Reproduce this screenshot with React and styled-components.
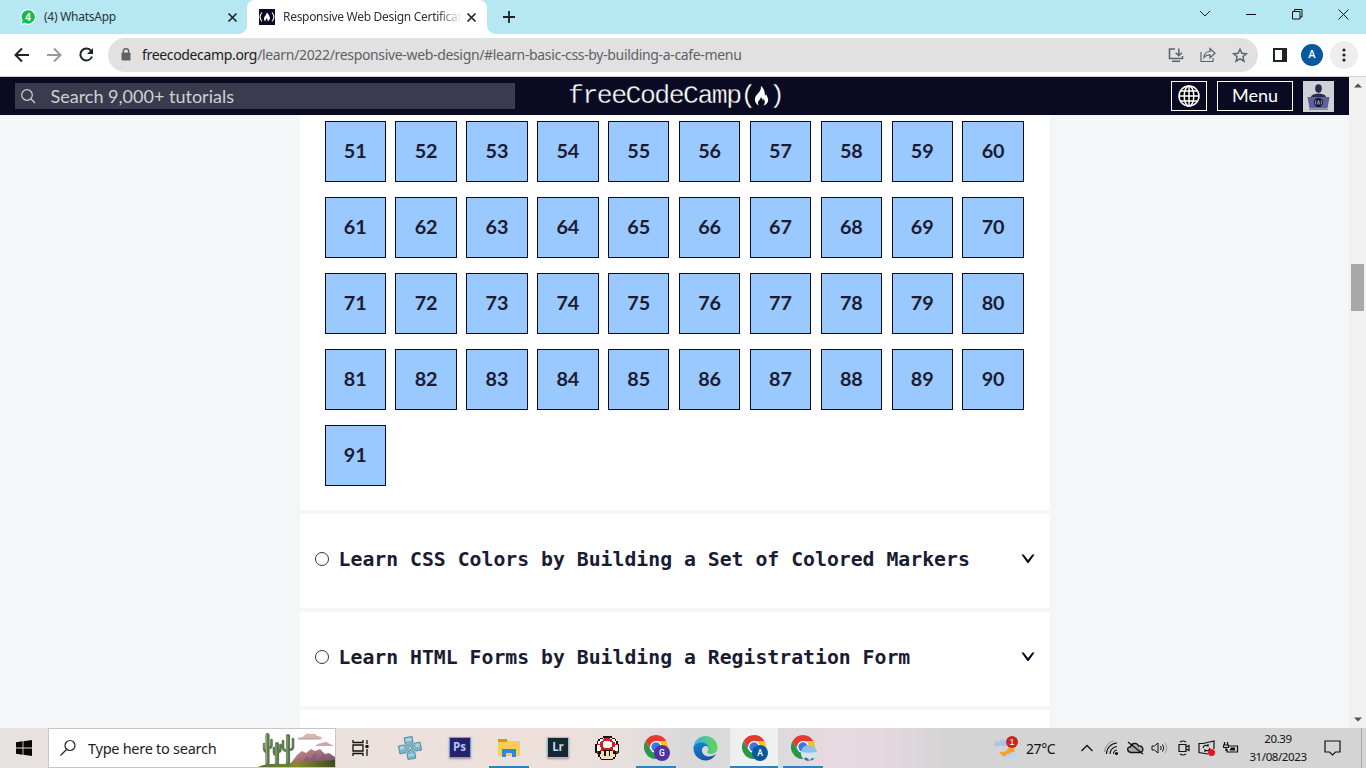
import React from "react";
import styled, { createGlobalStyle } from "styled-components";

const Global = createGlobalStyle`
  *{box-sizing:border-box}
  body{margin:0;overflow:hidden;background:#fff;}
  svg{display:block;flex:none}
`;
const ui = `"Noto Sans","Open Sans",sans-serif`;
const lato = `Lato,sans-serif`;

const Screen = styled.div`width:1366px;height:768px;display:flex;flex-direction:column;overflow:hidden;font-family:${ui};`;
const TabStrip = styled.div`height:34px;background:#b5e8f3;display:flex;align-items:stretch;flex:none;`;
const Tab = styled.div`
  position:relative;width:${p => p.$w}px;display:flex;align-items:center;padding:0 ${p => p.$pr}px 0 ${p => p.$pl}px;color:#2a3235;
  background:${p => (p.$active ? "#fff" : "transparent")};border-radius:8px 8px 0 0;
  ${p => p.$active && `
    &::before,&::after{content:"";position:absolute;bottom:0;width:8px;height:8px;}
    &::before{left:-8px;background:radial-gradient(circle at 0 0,transparent 7.5px,#fff 8px);}
    &::after{right:-8px;background:radial-gradient(circle at 100% 0,transparent 7.5px,#fff 8px);}
  `}
`;
const TabLabel = styled.span`
  flex:1;min-width:0;white-space:nowrap;margin:0 4px 0 ${p => p.$ml}px;font-size:12px;line-height:18px;letter-spacing:${p => p.$ls}px;
  ${p => p.$fade && "mask-image:linear-gradient(90deg,#000 86%,transparent);"}
`;
const NewTab = styled.div`padding:11px 0 0 16px;flex:1;`;
const WindowButtons = styled.div`display:flex;align-items:center;height:28px;`;
const WindowButton = styled.div`width:46px;display:flex;justify-content:center;`;

const Toolbar = styled.div`height:43px;flex:none;background:#fff;border-bottom:1px solid #d0d2d2;display:flex;align-items:center;`;
const NavButtons = styled.div`display:flex;gap:12px;width:108px;padding-left:12px;`;
const Address = styled.div`
  width:1150px;height:34px;border-radius:17px;background:#e1e1e1;display:flex;align-items:center;padding:0 8px 0 8px;
`;
const Url = styled.div`flex:1;margin-left:6px;font-size:14px;line-height:20px;color:#5f6265;letter-spacing:-.338px;white-space:nowrap;b{font-weight:400;color:#1d2023}`;
const AddressIcons = styled.div`display:flex;gap:12px;`;
const Avatar = styled.div`width:22px;height:22px;border-radius:50%;background:#07599e;color:#fff;font:500 11px/22px Roboto,sans-serif;text-align:center;margin-left:14px;`;
const MoreButton = styled.div`width:28px;height:28px;border-radius:50%;background:#eee;display:flex;align-items:center;justify-content:center;margin-left:7px;`;

const Viewport = styled.div`height:651px;flex:none;display:flex;`;
const Site = styled.div`width:1349px;display:flex;flex-direction:column;background:#f5f6f7;overflow:hidden;`;
const SiteNav = styled.header`height:38px;flex:none;background:#0a0a23;display:flex;align-items:center;padding:0 15px;`;
const SearchBox = styled.div`width:500px;height:26px;background:#3b3b4f;color:#d0d0d5;display:flex;align-items:center;padding-left:5px;font:18px/26px ${lato};span{margin-left:13.500px}`;
const Logo = styled.div`
  display:flex;align-items:center;margin-left:53px;width:603px;height:38px;color:#fff;white-space:nowrap;
  font:26.500px/36px "Liberation Mono",monospace;letter-spacing:-1.52px;-webkit-text-stroke:.35px #0a0a23;svg{margin:0 0 1px -1px}
`;
const NavButton = styled.div`height:30px;width:${p => p.$w}px;border:1px solid #fff;color:#fff;display:flex;align-items:center;justify-content:center;font:18px/27px ${lato};margin-right:10px;padding-bottom:1px;`;

const Main = styled.main`width:750px;margin-left:300px;flex:1;overflow:hidden;`;
const StepsPanel = styled.section`background:#fff;height:395px;padding:6px 0 0 24.52px;`;
const StepGrid = styled.div`display:grid;grid-template-columns:repeat(10,61.45px);column-gap:9.45px;row-gap:15.1px;`;
const Step = styled.div`height:61px;border:1px solid #0a0a23;background:#99c9ff;color:#1b1b32;font:700 19.8px/56.6px ${lato};text-align:center;`;
const Course = styled.section`margin-top:4px;height:94px;background:#fff;display:flex;align-items:center;padding:0 15px 4px;`;
const CourseTitle = styled.h3`flex:1;margin:1px 0 0 9.6px;color:#1b1b32;font:700 19.8px/30px "DejaVu Sans Mono",monospace;white-space:nowrap;`;

const ScrollTrack = styled.div`width:17px;background:#f1f1f1;display:flex;flex-direction:column;align-items:center;`;
const ScrollArrow = styled.div`height:17px;display:flex;align-items:center;`;
const ScrollThumb = styled.div`width:13px;height:47px;margin:170px 0 400px;background:#a8a8a8;`;

const Taskbar = styled.footer`
  height:40px;flex:none;display:flex;color:#111;
  background:linear-gradient(90deg,#e6e2df 0,#ebe1dd 340px,#eee0db 560px,#e5dfdd 630px,#d9d9da 690px,#dddadc 780px,#e7d9e0 830px,#e5d8df 880px,#d4d4d4 950px);
`;
const StartButton = styled.div`width:48px;display:flex;align-items:center;justify-content:center;`;
const TaskSearch = styled.div`width:288px;background:#fff;border:1px solid #c6c6c6;display:flex;align-items:center;padding-left:10px;font-size:14.5px;color:#222;overflow:hidden;`;
const TaskSearchText = styled.span`flex:1;margin-left:11px;white-space:nowrap;letter-spacing:-.27px;`;
const TaskApp = styled.div`
  width:${p => p.$w || 49}px;display:flex;align-items:center;justify-content:center;
  background:${p => (p.$active ? "#f0eff0" : "transparent")};
  ${p => p.$open && `box-shadow:inset 0 -2px #2f83b8;`}
  ${p => p.$gap && `margin:0 ${p.$gap}px;`}
  ${p => p.$shift && `padding-left:${p.$shift}px;`}
`;
const AppTile = styled.div`width:22px;height:21px;border:1px solid ${p => p.$edge};background:${p => p.$bg};color:${p => p.$fg};font:700 11.5px/18px "Open Sans",sans-serif;text-align:center;box-shadow:0 1px 2px #0005;margin-bottom:2px;`;
const Tray = styled.div`margin-left:auto;width:373px;display:flex;align-items:center;`;
const Temp = styled.span`margin-left:7px;width:51px;font-size:14px;letter-spacing:-.4px;white-space:nowrap;`;
const TrayIcons = styled.div`display:flex;align-items:center;gap:7px;margin-left:${p => p.$ml}px;`;
const Clock = styled.div`width:80px;text-align:center;font-size:11.5px;line-height:18px;letter-spacing:-.4px;margin-left:-1px;`;
const DesktopEdge = styled.div`margin-left:auto;width:5px;height:40px;border-left:1px solid #a3a3a3;`;

const Close = () => <svg width="11" height="11" viewBox="0 0 11 11"><path d="M1.5 1.5l8 8m0-8l-8 8" stroke="#202427" strokeWidth="1.7" /></svg>;
const Flame = ({ w, h, c = "#fff" }) => (
  <svg width={w} height={h} viewBox="0 0 14 20"><path fill={c} d="M6.300 0c.5 3.200-.7 5-2.700 7.300C1.600 9.700.2 11.500.4 14c.2 2.600 2 4.600 4.200 5.600-1.200-1.400-1.500-3-.6-4.500.8-1.300 2.300-2 2.200-3.800 1.600.8 2 2 1.700 3.100 1-.2 1.400-1 1.300-1.900 1.300 2 1.600 5.200-.3 7.200 2.900-1 4.900-3.200 4.800-6.100-.1-2.300-1.700-3.500-2-5.700-.4.900-.6 1.500-1.300 1.600C10.600 6.400 9.600 2 6.300 0z" /></svg>
);
const FccBadge = () => (
  <svg width="16" height="16" viewBox="0 0 16 16"><path fill="#0a0a23" d="M0 0h16v16H0z" /><path d="M3 3.500c-2.300 2.700-2.300 6.300 0 9m10-9c2.300 2.700 2.300 6.300 0 9" fill="none" stroke="#fff" strokeWidth="1.100" /><path fill="#fff" d="M7.500 3.500c.4 2.500-2.800 4-2.500 6.500 0 1.200.8 2 1.600 2.300-.5-1.300.7-2 1-3 .8.900 1.500 1.900.8 3 1.800-.4 2.700-1.600 2.500-3.200C10.700 7 9.500 4.500 7.500 3.500z" /></svg>
);
const Chevron = () => <svg width="14" height="12" viewBox="0 0 14 12"><path d="M.4 1.500h2.300L7 7 11.300 1.500h2.300L7.600 10H6.400z" fill="#0a0a23" /></svg>;

const Chrome = ({ children }) => (
  <svg width="28" height="28" viewBox="0 0 28 28">
    <path d="M1.600 7A12 12 0 0 1 22.400 7L12 7z" fill="#e33b2e" />
    <path d="M1.600 7A12 12 0 0 0 12 25L17.200 16 6.800 16z" fill="#279847" />
    <path d="M22.400 7A12 12 0 0 1 12 25L17.200 16 12 7z" fill="#fbc116" />
    <path d="M1.600 7h10.400v6H5z" fill="#e33b2e" />
    <circle cx="12" cy="13" r="6" fill="#fff" /><circle cx="12" cy="13" r="4.700" fill="#3979de" />
    {children}
  </svg>
);
const ProfileDot = ({ fill, letter }) => (<><circle cx="18" cy="19" r="8" fill={fill} /><text x="18" y="22.200" textAnchor="middle" fontFamily="Roboto" fontSize="8.500" fontWeight="500" fill="#fff">{letter}</text></>);

const Desert = () => (
  <svg width="77" height="38" viewBox="0 0 77 38">
    <defs><linearGradient id="mt" x2="1" y2="1"><stop stopColor="#d38f8a" /><stop offset="1" stopColor="#674c6c" /></linearGradient><linearGradient id="hill" x2="1"><stop stopColor="#4e6b24" /><stop offset=".5" stopColor="#8a8a2c" /><stop offset="1" stopColor="#3d4a20" /></linearGradient></defs>
    <path d="M39 10q1-2 6-2 3-5 8-3 5-1 6 2 5 0 5 3z" fill="#dfb3a6" /><path d="M39 10.500h25q-6-2-12-1-7-1-13 1z" fill="#9ba1c0" />
    <path d="M57 17q3-3 7-3 4-2 6 0l6 3z" fill="#c9a6ab" />
    <path d="M33 34l6-8 5-4 4 2 5-4 4 2 5-2 5 5 4-1 6 4v7z" fill="url(#mt)" />
    <path d="M44 34l5-7 3 4 5-8 2 9 7-7 4 9z" fill="#84597a" opacity=".7" />
    <path d="M0 38q9-4 25-3 20-3 53-4v7z" fill="url(#hill)" />
    <g fill="none" strokeLinecap="round"><g stroke="#5d7950" strokeWidth="4.200"><path d="M9.500 36V6M19 36V15M30 36V7" /></g><g stroke="#5d7950" strokeWidth="2.600"><path d="M6 15v4q0 4 4 4M13.500 11v5q0 3-3 3M16 19v4q0 3 3 3M22.500 16v4q0 3-3 3M25 12v6q0 4 5 4M35 10v8q0 3-5 3" /></g><g stroke="#9eb07c" strokeWidth=".9"><path d="M8.500 34V6M18 34V15M29 34V7M6 15v4" /></g></g>
  </svg>
);

const mushroomRows = [
  ".....kkkkkk.....",
  "...kkwrrrrwkk...",
  "..kwwrrrrrrwwk..",
  ".kwwrrwwwwrrwwk.",
  ".kwrrwwwwwwrrwk.",
  "krrrrwwwwwwrrrrk",
  "kwwrrwwwwwwrrwwk",
  "kwwwrrwwwwrrwwwk",
  "kwwwrrrrrrrrwwwk",
  "kwwrrkkkkkkrrwwk",
  "krkkppkppkppkkrk",
  ".kkkppkppkppkkk.",
  "..kpppkppkpppk..",
  "..kppppppppppk..",
  "...kppppppppk...",
  "....kkkkkkkk....",
];
const mushroomInk = { k: "#16110f", w: "#fff", r: "#d51d1f", p: "#f5dcb8" };
const Mushroom = () => (
  <svg width="24" height="24" viewBox="0 0 16 16" shapeRendering="crispEdges">
    {mushroomRows.flatMap((row, y) => [...row].map((c, x) => c !== "." && <rect key={`${x}-${y}`} x={x} y={y} width="1" height="1" fill={mushroomInk[c]} />))}
  </svg>
);

const courses = ["Learn CSS Colors by Building a Set of Colored Markers", "Learn HTML Forms by Building a Registration Form"];

function BrowserTop() {
  return (<>
    <TabStrip>
      <Tab $w={247} $pl={20} $pr={9.5}>
        <svg width="16" height="16" viewBox="0 0 16 16"><path d="M8 .2a7.800 7.800 0 1 1-3.500 14.700L.5 16l1-4A7.800 7.800 0 0 1 8 .2z" fill="#fff" /><path d="M8 1.200a6.700 6.700 0 1 1-3 12.600L1.800 14.700l.9-3.100A6.700 6.700 0 0 1 8 1.200z" fill="#13bd4b" /><text x="8" y="11.500" textAnchor="middle" fontSize="10" fontWeight="700" fontFamily="Liberation Sans" fill="#fff">4</text></svg>
        <TabLabel $ml={8} $ls={-.25}>(4) WhatsApp</TabLabel><Close />
      </Tab>
      <Tab $w={240} $pl={12} $pr={10.5} $active><FccBadge /><TabLabel $ml={8} $ls={-.3} $fade>Responsive Web Design Certificat</TabLabel><Close /></Tab>
      <NewTab><svg width="12" height="12"><path d="M6 0v12M0 6h12" stroke="#1d2528" strokeWidth="1.800" /></svg></NewTab>
      <WindowButtons>
        <WindowButton><svg width="12" height="8"><path d="M1 1l5 5 5-5" fill="none" stroke="#222" /></svg></WindowButton>
        <WindowButton><svg width="10" height="2"><path d="M0 1.500h10" stroke="#111" /></svg></WindowButton>
        <WindowButton><svg width="11" height="11" fill="none" stroke="#111"><path d="M.5 2.500h7.500v7.500H.5zM2.500 2.500v-2h7.500v7.500H8" /></svg></WindowButton>
        <WindowButton><svg width="11" height="11"><path d="M.5.5l10 10m0-10l-10 10" stroke="#111" /></svg></WindowButton>
      </WindowButtons>
    </TabStrip>
    <Toolbar>
      <NavButtons>
        <svg width="20" height="20" viewBox="0 0 20 20" fill="none" stroke="#202427" strokeWidth="2"><path d="M17 10H4M10 3.500L3.500 10l6.500 6.500" /></svg>
        <svg width="20" height="20" viewBox="0 0 20 20" fill="none" stroke="#999" strokeWidth="2"><path d="M3 10h13M10 3.500l6.500 6.500-6.500 6.500" /></svg>
        <svg width="20" height="20" viewBox="0 0 20 20" fill="none" stroke="#202427" strokeWidth="2"><path d="M15.200 6A6 6 0 1 0 16 11.500" /><path d="M17 3v6h-6z" fill="#202427" stroke="none" /></svg>
      </NavButtons>
      <Address>
        <svg width="20" height="20" viewBox="0 0 20 20"><path d="M6 8h8v7H6z" fill="#5f6265" stroke="#5f6265" strokeLinejoin="round" /><path d="M7.300 8V6.500a2.700 2.700 0 0 1 5.400 0V8" fill="none" stroke="#5f6265" strokeWidth="1.400" /></svg>
        <Url><b>freecodecamp.org</b>/learn/2022/responsive-web-design/#learn-basic-css-by-building-a-cafe-menu</Url>
        <AddressIcons>
          <svg width="20" height="20" viewBox="0 0 20 20" fill="none" stroke="#5f6265" strokeWidth="1.500"><path d="M9 4H3.500v9.500h13V11M6 16.300h8M12.800 3.500v7M9.700 7.700l3.100 3.100 3.100-3.100" /></svg>
          <svg width="20" height="20" viewBox="0 0 20 20" fill="none" stroke="#5f6265" strokeWidth="1.200"><path d="M3 7v9.500h12V13M6 12.500c.3-4 2.500-6 6-6V3.500l5 4.700-5 4.600V9.800c-2.800 0-4.500.8-6 2.700z" /></svg>
          <svg width="20" height="20" viewBox="0 0 20 20" fill="none" stroke="#5f6265" strokeWidth="1.400"><path d="M10 4l1.800 4.300 4.600.4-3.500 3 1.100 4.500-4-2.400-4 2.400 1.100-4.500-3.500-3 4.600-.4z" /></svg>
        </AddressIcons>
      </Address>
      <svg width="14" height="14" style={{ marginLeft: 15 }}><path d="M1 1h12v12H1z" fill="#fff" stroke="#202427" strokeWidth="2" /><path d="M9 0h5v14H9z" fill="#202427" /></svg>
      <Avatar>A</Avatar>
      <MoreButton><svg width="4" height="14" fill="#222"><circle cx="2" cy="2" r="1.600" /><circle cx="2" cy="7" r="1.600" /><circle cx="2" cy="12" r="1.600" /></svg></MoreButton>
    </Toolbar>
  </>);
}

function SiteHeader() {
  return (
    <SiteNav>
      <SearchBox><svg width="17" height="17" viewBox="0 0 17 17" fill="none" stroke="#d0d0d5" strokeWidth="1.200"><circle cx="7" cy="7" r="5.300" /><path d="M11 11l4 4" /></svg><span>Search 9,000+ tutorials</span></SearchBox>
      <Logo>freeCodeCamp(<Flame w={15} h={20} />)</Logo>
      <NavButton $w={36}><svg width="24" height="24" viewBox="0 0 24 24" fill="none" stroke="#fff" strokeWidth="1.500"><circle cx="12" cy="12" r="10" fill="#000" /><ellipse cx="12" cy="12" rx="4.800" ry="10" /><path d="M12 2v20M2 12h20M3.500 7h17M3.500 17h17" /></svg></NavButton>
      <NavButton $w={76}>Menu</NavButton>
      <svg width="31" height="31" viewBox="0 0 31 31"><path fill="#d0d0d5" d="M0 0h31v31H0z" /><ellipse cx="15.500" cy="7.500" rx="3.300" ry="4.200" fill="#2a2a4a" /><path d="M8 16q0-3 7.500-3.500Q23 13 23 16z" fill="#2a2a4a" /><path d="M4.500 16h22l-2 11.500h-18z" fill="#5f5f9c" /><circle cx="15.500" cy="21.500" r="4.600" fill="#14142e" /><path d="M13 19.500q-1.500 2 0 4M18 19.500q1.500 2 0 4M14.500 23.500l1-4 1 4" fill="none" stroke="#d0d0d5" strokeWidth=".8" /><path d="M6 28.500h19" stroke="#8585b0" /></svg>
    </SiteNav>
  );
}

function Tasks() {
  return (
    <Taskbar>
      <StartButton><svg width="16" height="16" viewBox="0 0 16 16"><path d="M0 2.200l6.600-.9v6.200H0zM7.400 1.200L16 0v7.500H7.400zM0 8.400h6.600v6.300L0 13.800zM7.400 8.400H16V16l-8.600-1.200z" fill="#080808" /></svg></StartButton>
      <TaskSearch>
        <svg width="18" height="18" viewBox="0 0 18 18" fill="none" stroke="#222" strokeWidth="1.200"><circle cx="11" cy="6.500" r="5" /><path d="M7.500 10.500L1.500 16.500" /></svg>
        <TaskSearchText>Type here to search</TaskSearchText><Desert />
      </TaskSearch>
      <TaskApp $w={48}><svg width="17" height="16" viewBox="0 0 17 16" fill="none" stroke="#111" strokeWidth="1.300"><path d="M1 0v2.500h10V0M1 5h10v6H1zM1 16v-2.500h10V16M15 0v4M15 9v7" /><path d="M13.500 5h3v3h-3z" fill="#111" stroke="none" /></svg></TaskApp>
      <TaskApp $w={51} $shift={1}><svg width="24" height="24" viewBox="0 0 24 24"><g fill="#79b8cb" stroke="#4f8196" strokeWidth=".8" transform="rotate(-10 12 12)"><path d="M8 1h8v6l-4 4-4-4zM8 23h8v-6l-4-4-4 4zM1 8v8h6l4-4-4-4zM23 8v8h-6l-4-4 4-4z" /><path d="M9 2h6v3H9zM2 9h4v3H2zM18 9h4v3h-4zM9 18h6v2H9z" fill="#add9e4" stroke="none" /></g></svg></TaskApp>
      <TaskApp><AppTile $bg="#28206b" $fg="#a8c9fb" $edge="#6aa4dc">Ps</AppTile></TaskApp>
      <TaskApp $w={40} $gap={5} $open><svg width="22" height="20" viewBox="0 0 22 20"><path d="M0 2h9l2 1h11v15H0z" fill="#f9cc53" /><path d="M0 1h9v3H0z" fill="#d8970c" /><path d="M4 19v-8h14v8h-4v-4H8v4z" fill="#2e88d9" /></svg></TaskApp>
      <TaskApp $w={48}><AppTile $bg="#18262f" $fg="#b8dcec" $edge="#93c4d6">Lr</AppTile></TaskApp>
      <TaskApp $w={49}><Mushroom /></TaskApp>
      <TaskApp $w={40} $gap={5} $shift={4} $open><Chrome><ProfileDot fill="#5230a5" letter="G" /></Chrome></TaskApp>
      <TaskApp $w={49}><svg width="25" height="25" viewBox="0 0 25 25"><defs><linearGradient id="ea" x2="1"><stop stopColor="#35b6e4" /><stop offset="1" stopColor="#62d64f" /></linearGradient><linearGradient id="eb" x2=".5" y2="1"><stop stopColor="#1883d4" /><stop offset="1" stopColor="#1256aa" /></linearGradient></defs><path d="M.5 12A12 12 0 0 1 24.500 12c0 4-3 6-7 6-2 0-4-1-3-2.500 2-3 0-6.500-4-6.500-4 0-8 1-10 3z" fill="url(#ea)" /><path d="M.5 12c1-4 5-6 9-5.500 3 .3 6 3 6 5.500-1-2-3-2.500-4.500-1.500C7 13 9 20 15 20.500c3 .2 6-.8 8-2.500C20 23 16 24.500 12.500 24.500A12 12 0 0 1 .5 12z" fill="url(#eb)" /></svg></TaskApp>
      <TaskApp $w={48} $shift={4} $open $active><Chrome><ProfileDot fill="#07599e" letter="A" /></Chrome></TaskApp>
      <TaskApp $w={40} $gap={5} $shift={4} $open><Chrome><circle cx="18" cy="19" r="8" fill="#8fc1e6" /><path d="M10.100 18q8 1.500 15.800 0a8 8 0 0 1-2.500 6.800H12.500a8 8 0 0 1-2.400-6.800z" fill="#d3e5f0" /><path d="M13 25q2-3 4 0l1 2q-3 0-5-2zM20 25q2-2 3 0l-3 1.500z" fill="#59636f" /></Chrome></TaskApp>
      <Tray>
        <svg width="26" height="26" viewBox="0 0 26 26"><path d="M16 8c1 6-3 10-10 9 3 5 10 7 14 3s1-10-4-12z" fill="#f5a32a" /><path d="M2 9c0-3 3-4 4-2 2-4 7-3 7 1 3 0 3 3 1 3H3c-2 0-3-1-1-2z" fill="#a8c6eb" /><path d="M13 21c0-3 3-3 4-2 2-4 6-2 6 1 3 0 3 3 1 3H13c-2 0-2-2 0-2z" fill="#bdd4ef" /><circle cx="19" cy="7" r="6" fill="#c9261f" /><text x="19" y="10" textAnchor="middle" fontFamily="Liberation Sans" fontSize="9" fill="#fff">1</text></svg>
        <Temp>27°C</Temp>
        <TrayIcons $ml={3}>
          <svg width="14" height="10"><path d="M1.500 8L7 2.500 12.500 8" fill="none" stroke="#111" strokeWidth="1.300" /></svg>
        </TrayIcons>
        <TrayIcons $ml={10}>
          <svg width="16" height="16" viewBox="0 0 16 16" fill="none" stroke="#111" strokeWidth="1.100"><path d="M2.500 14A11 11 0 0 1 13 3M6 14a7.500 7.500 0 0 1 7-7.500M9.500 14A4 4 0 0 1 13 10" /><path d="M.5 12A12 12 0 0 1 10 .8" stroke="#999" /><circle cx="12.500" cy="13.500" r="1" fill="#111" /></svg>
          <svg width="17" height="14" viewBox="0 0 17 14" fill="none" stroke="#111" strokeWidth="1.300"><path d="M4 11.500C-.5 11-.2 5.500 3.500 6 4 2 10 1 11.500 5c5-.5 6 6 1.500 6.500z" fill="#aaa" /><path d="M1 1l15 12" /></svg>
          <svg width="18" height="14" viewBox="0 0 18 14" fill="none" stroke="#111"><path d="M1 5h2.500L7 2v10L3.500 9H1z" /><path d="M9.500 5q1.500 2 0 4M11.500 3.500q2.500 3.500 0 7" /><path d="M14 2q3.500 5 0 10" stroke="#999" /></svg>
        </TrayIcons>
        <TrayIcons $ml={8}>
          <svg width="14" height="16" viewBox="0 0 14 16" fill="none" stroke="#111" strokeWidth="1.200"><path d="M2 4.500h7v7H2zM9 7l3-1.500v5L9 9M3 2q3-2 6 0M3 14q3 2 6 0" /></svg>
          <svg width="18" height="17" viewBox="0 0 18 17" fill="none" stroke="#111" strokeWidth="1.200"><path d="M10 14L1 12.500v-9h4L16 1v8M5 8q1-4 5-2V4M12 8q-1 4-5 2v2" /><circle cx="13.500" cy="12.500" r="3.500" fill="#e81123" stroke="none" /></svg>
          <svg width="16" height="12" viewBox="0 0 16 12" fill="none" stroke="#111" strokeWidth="1.200"><path d="M5 4h9.500v6H4V7M1.500 0v3M4.500 0v3M.5 3h5v2.500h-5zM3 5.500V9" /><path d="M8 5.500h4v3H6.500z" fill="#111" stroke="none" /></svg>
        </TrayIcons>
        <Clock>20.39<br />31/08/2023</Clock>
        <svg width="18" height="17" viewBox="0 0 18 17" style={{ marginLeft: 6 }}><path d="M1 1h15v11h-4.500l-3 3-3-3H1z" fill="none" stroke="#111" strokeWidth="1.200" /></svg>
        <DesktopEdge />
      </Tray>
    </Taskbar>
  );
}

export default function App() {
  return (
    <Screen>
      <Global />
      <BrowserTop />
      <Viewport>
        <Site>
          <SiteHeader />
          <Main>
            <StepsPanel><StepGrid>{Array.from({ length: 41 }, (_, i) => <Step key={i}>{i + 51}</Step>)}</StepGrid></StepsPanel>
            {courses.map(c => (
              <Course key={c}><svg width="14" height="14"><circle cx="7" cy="7" r="6.500" fill="none" stroke="#1b1b32" strokeWidth=".9" /></svg><CourseTitle>{c}</CourseTitle><Chevron /></Course>
            ))}
            <Course />
          </Main>
        </Site>
        <ScrollTrack>
          <ScrollArrow><svg width="8" height="5"><path d="M0 4.500L4 .5l4 4z" fill="#505050" /></svg></ScrollArrow>
          <ScrollThumb />
          <ScrollArrow><svg width="8" height="5"><path d="M0 .5l4 4 4-4z" fill="#505050" /></svg></ScrollArrow>
        </ScrollTrack>
      </Viewport>
      <Tasks />
    </Screen>
  );
}
